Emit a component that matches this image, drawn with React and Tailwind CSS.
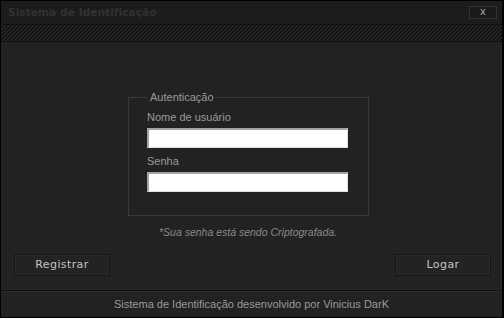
import React from 'react';

export default function App() {
  return (
    <div className="w-[504px] h-[318px] bg-black flex flex-col border border-black border-r-[2px] font-['Liberation_Sans',sans-serif] overflow-hidden">
      {/* title bar */}
      <div className="h-[23px] shrink-0 bg-[#1c1c1c] flex items-center justify-between pl-[7px] pr-[5px]">
        <span className="font-['DejaVu_Sans',sans-serif] font-bold text-[10.5px] text-[#323232] tracking-[0.1px]">
          Sistema de Identificação
        </span>
        <button className="w-[28px] h-[13px] border border-[#333] bg-[#1a1a1a] flex items-center justify-center text-[10px] leading-none text-[#9ab] font-['DejaVu_Sans',sans-serif] pb-[2px]">
          x
        </button>
      </div>
      <div className="h-px shrink-0 bg-[#101010]" />
      <div className="h-[16px] shrink-0 bg-[repeating-linear-gradient(135deg,#2e2e2e_0px,#2e2e2e_1.2px,#161616_1.2px,#161616_2.83px)]" />
      <div className="h-px shrink-0 bg-[#101010]" />

      {/* content */}
      <div className="flex-1 bg-[#222222] flex flex-col pl-[12px] pr-[10px] border-r border-[#2c2c2c]">
        <fieldset className="ml-[115px] w-[240px] mt-[48px] border border-[#3a3a3a] pl-[18px] pr-[20px] pb-[23px]">
          <legend className="px-[3px] text-[11px] leading-[14px] text-[#9a9a9a]">Autenticação</legend>
          <div className="text-[11px] leading-[14px] text-[#9a9a9a] mt-[6px]">Nome de usuário</div>
          <div className="mt-[4px] h-[20px] w-[201px] bg-white border-t-2 border-l-2 border-[#a3a3a3] border-r border-b border-r-[#e0e0e0] border-b-[#e0e0e0]" />
          <div className="text-[11px] leading-[14px] text-[#9a9a9a] mt-[6px]">Senha</div>
          <div className="mt-[4px] h-[20px] w-[201px] bg-white border-t-2 border-l-2 border-[#a3a3a3] border-r border-b border-r-[#e0e0e0] border-b-[#e0e0e0]" />
        </fieldset>
        <div className="text-center italic text-[10.5px] leading-[14px] text-[#8a8a8a] mt-[9px] pr-[8px]">
          *Sua senha está sendo Criptografada.
        </div>
        <div className="flex justify-between mt-[15px] pl-px">
          <button className="w-[96px] h-[22px] border border-[#141414] bg-[#232323] text-[11px] text-[#c4c4c4] tracking-[0.4px] font-['DejaVu_Sans',sans-serif] shadow-[inset_0_0_0_1px_#2a2a2a]">
            Registrar
          </button>
          <button className="w-[96px] h-[22px] border border-[#141414] bg-[#232323] text-[11px] text-[#c4c4c4] tracking-[0.4px] font-['DejaVu_Sans',sans-serif] shadow-[inset_0_0_0_1px_#2a2a2a]">
            Logar
          </button>
        </div>
      </div>

      {/* footer */}
      <div className="h-px shrink-0 bg-[#111111]" />
      <div className="h-[26px] shrink-0 bg-[#222222] border-t border-[#2e2e2e] flex items-center justify-center text-[11px] text-[#9a9a9a]">
        Sistema de Identificação desenvolvido por Vinicius DarK
      </div>
    </div>
  );
}
